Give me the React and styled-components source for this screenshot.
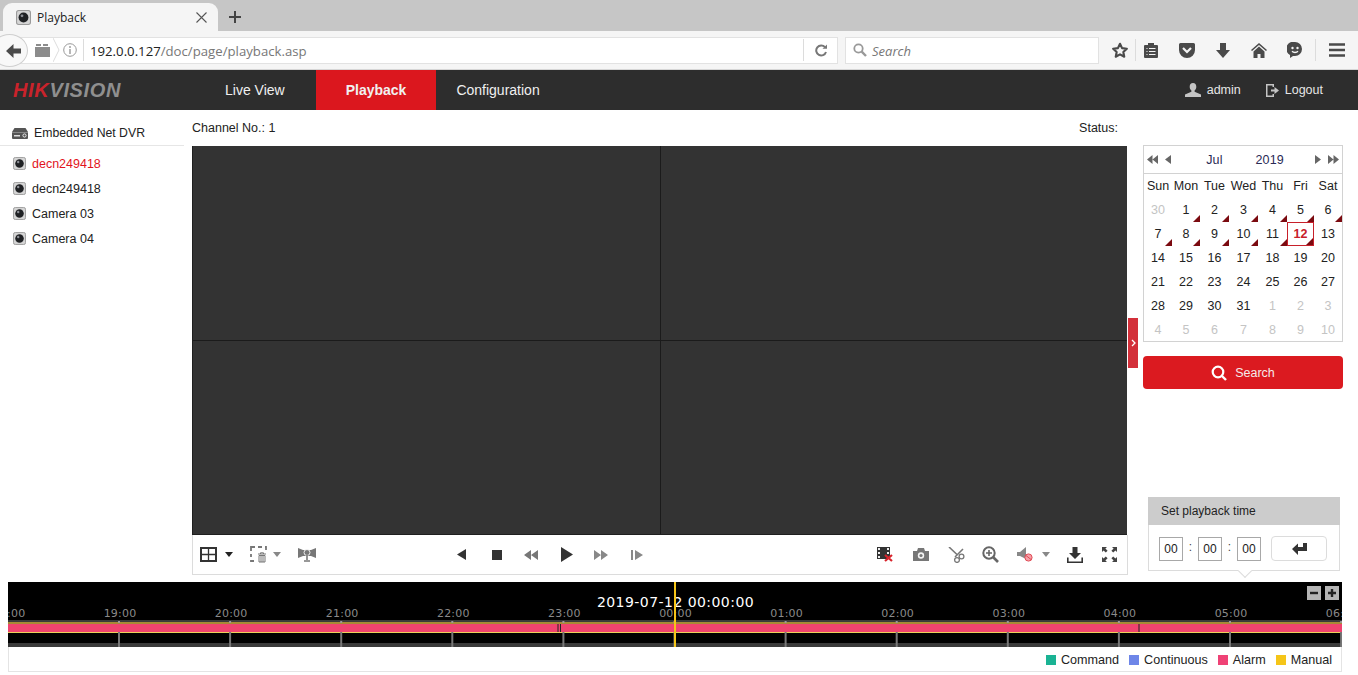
import React from "react";
import styled, { createGlobalStyle } from "styled-components";

const Global = createGlobalStyle`
  html, body { margin: 0; padding: 0; background: #fff; height: 675px; overflow: hidden; }
  body { font-family: "Liberation Sans", Arial, sans-serif; font-size: 12.5px; color: #222; }
  * { box-sizing: border-box; }
`;

const TabStrip = styled.div`
  height: 31px; background: #c6c6c6; display: flex; align-items: flex-end; padding-left: 3px;
`;
const Tab = styled.div`
  width: 215px; height: 28px; background: #f5f5f5; border-radius: 9px 9px 0 0;
  display: flex; align-items: center; padding: 0 11px 0 13px; gap: 6px;
  font-family: "Open Sans", sans-serif; font-size: 12px; color: #222;
`;
const TabTitle = styled.span` flex: 1; `;
const NewTab = styled.div` margin: 0 0 7px 10px; height: 14px; display: flex; `;

const NavBar = styled.div`
  height: 39px; background: #f5f5f5; border-bottom: 1px solid #d6d6d6;
  display: flex; align-items: center; position: relative; padding-left: 0;
`;
const BackCircle = styled.div`
  position: absolute; left: -9px; top: 3px; width: 37px; height: 33px; border-radius: 50%;
  background: #f8f8f8; border: 1px solid #cfcfcf; display: flex; align-items: center; justify-content: flex-end; padding-right: 6px;
`;
const UrlBox = styled.div`
  width: 838px; height: 27px; background: #fff; border: 1px solid #e2e2e2; border-left: 0;
  display: flex; align-items: center; padding-left: 35px;
`;
const UrlPart = styled.span`
  font-family: "Open Sans", sans-serif; font-size: 13.2px; padding-top: 1px; color: ${p => (p.$dim ? "#777" : "#222")};
`;
const UrlSep = styled.div` width: 1px; height: 22px; background: #dcdcdc; margin: ${p => p.$m}; `;
const SearchBox = styled.div`
  width: 254px; height: 27px; margin-left: 7px; background: #fff; border: 1px solid #e2e2e2;
  display: flex; align-items: center; padding-left: 7px; gap: 5px;
  font-family: "Open Sans", sans-serif; font-style: italic; font-size: 13px; color: #777;
`;
const SearchHint = styled.span` padding-top: 1px; `;
const NavIcons = styled.div` display: flex; align-items: center; margin-left: 12px; `;
const NavSlot = styled.div`
  width: ${p => p.$w}px; display: flex; justify-content: center; align-items: center; height: 24px; flex: none;
`;

const Header = styled.header`
  height: 40px; background: #2d2d2d; display: flex; align-items: center;
`;
const Logo = styled.div`
  width: 205px; padding-left: 13px; font-style: italic; font-weight: bold; font-size: 20px; letter-spacing: 0.65px; color: #8f8f8f;
`;
const LogoRed = styled.span` color: #c9232b; `;
const MainNav = styled.nav` display: flex; height: 40px; `;
const NavItem = styled.div`
  height: 40px; display: flex; align-items: center; font-size: 14px;
  padding: 0 ${p => (p.$active ? 30 : 20)}px; margin-left: ${p => (p.$active ? 11 : 0)}px;
  background: ${p => (p.$active ? "#db171e" : "transparent")}; color: #f0f0f0;
  font-weight: ${p => (p.$active ? "bold" : "normal")};
`;
const UserArea = styled.div`
  margin-left: auto; display: flex; align-items: center; padding-right: 35px; color: #e6e6e6; font-size: 12.5px;
`;
const UserLabel = styled.span` margin: 0 ${p => p.$mr || 0}px 0 ${p => p.$ml}px; `;

const Main = styled.main` display: flex; height: 465px; `;
const Sidebar = styled.aside` width: 184px; margin-right: 8px; flex: none; `;
const SideHead = styled.div`
  height: 36px; padding: 15px 0 0 12px; display: flex; align-items: flex-start; gap: 6px;
  border-bottom: 1px solid #e6e6e6; font-size: 12.25px; line-height: 16px;
`;
const CamList = styled.ul` list-style: none; margin: 5px 0 0; padding: 0 0 0 13px; `;
const CamItem = styled.li`
  height: 25px; display: flex; align-items: center; gap: 6px;
  color: ${p => (p.$active ? "#e2141c" : "#222")};
`;

const Center = styled.section` width: 936px; flex: none; position: relative; `;
const ChannelBar = styled.div`
  height: 36px; display: flex; justify-content: space-between; align-items: center; padding: 0 10px 0 0;
`;
const VideoGrid = styled.div`
  height: 389px; width: 935px; display: grid; grid-template-columns: 467px 466px; grid-template-rows: 194px 1fr; gap: 1px;
  background: #1b1b1b; border: solid #1f1f1f; border-width: 0 0 1px 1px;
`;
const VideoCell = styled.div` background: #333; `;
const Toolbar = styled.div`
  height: 40px; display: flex; align-items: center; padding: 0 9px 0 6px;
  border: 1px solid #dcdcdc; border-top: 0;
`;
const ToolGroup = styled.div` display: flex; align-items: center; margin-left: ${p => p.$ml || 0}; `;
const Tool = styled.div`
  width: ${p => p.$w}px; margin-left: ${p => p.$ml || 0}px; flex: none; height: 20px;
  display: flex; align-items: center; justify-content: center;
`;
const Handle = styled.div`
  position: absolute; left: 100%; top: 208px; width: 10px; height: 50px; background: #d3303a;
  display: flex; align-items: center; justify-content: center;
`;

const RightCol = styled.aside`
  width: 200px; margin-left: 15px; flex: none; padding-top: 35px; display: flex; flex-direction: column;
`;
const Calendar = styled.div` width: 200px; border: 1px solid #d2d2d2; height: 197px; `;
const CalHead = styled.div`
  height: 28px; border-bottom: 1px solid #d2d2d2; display: flex; align-items: center; padding: 0 3px;
  color: #2a2a55; font-size: 12.5px;
`;
const CalArrow = styled.div` width: ${p => p.$w}px; margin-left: ${p => p.$ml || 0}px; display: flex; justify-content: center; `;
const CalTitle = styled.div` width: ${p => p.$w}px; margin-left: ${p => p.$ml || 0}px; text-align: center; letter-spacing: .2px; `;
const CalGrid = styled.div`
  display: grid; grid-template-columns: 28px 28px 29px 29px 29px 27px 28px; grid-auto-rows: 24px;
`;
const CalWeek = styled.div` display: flex; align-items: center; justify-content: center; font-size: 12.5px; color: #222; `;
const Day = styled.div`
  position: relative; display: flex; align-items: center; justify-content: center; font-size: 12.5px;
  color: ${p => (p.$muted ? "#c4c4c4" : p.$selected ? "#c8202a" : "#222")};
  font-weight: ${p => (p.$selected ? "bold" : "normal")};
  border: ${p => (p.$selected ? "1px solid #c8202a" : "0")};
  &::after {
    content: ""; position: absolute; right: 0; bottom: 0;
    display: ${p => (p.$mark ? "block" : "none")}; border-style: solid; border-width: 0 0 7px 7px;
    border-color: transparent transparent #7b0a10 transparent;
  }
`;
const SearchButton = styled.button`
  margin-top: 14px; width: 200px; height: 33px; border: 0; border-radius: 4px; background: #db1a20; color: #f5eaea;
  display: flex; align-items: center; justify-content: center; gap: 8px; font: 12.5px "Liberation Sans", sans-serif;
`;
const TimePanel = styled.div`
  margin: auto 0 4px 5px; width: 192px; height: 74px; border: 1px solid #dcdcdc; border-top: 0; position: relative;
  &::after {
    content: ""; position: absolute; left: 91px; bottom: -6px; width: 9px; height: 9px; background: #fff;
    border: solid #dcdcdc; border-width: 0 1px 1px 0; transform: rotate(45deg);
  }
`;
const TimeHead = styled.div` height: 28px; background: #ccc; display: flex; align-items: center; padding-left: 13px; font-size: 12px; color: #222; margin: 0 -1px; `;
const TimeBody = styled.div` display: flex; align-items: center; padding: 11px 0 0 10px; `;
const TimeInput = styled.input`
  width: 24px; height: 24px; border: 1px solid #a8a8a8; padding: 0; text-align: center; background: #fff;
  font: 12px "Liberation Sans", sans-serif; color: #222; outline: none;
`;
const Colon = styled.span` width: 15px; text-align: center; font-size: 12px; margin-top: -4px; color: #444; `;
const EnterButton = styled.button`
  width: 56px; height: 25px; margin-left: 10px; background: #fff; border: 1px solid #dcdcdc; border-radius: 4px;
  display: flex; align-items: center; justify-content: center; padding: 0;
`;

const Timeline = styled.section` margin: 7px 16px 0 8px; height: 90px; position: relative; `;
const TimelineChart = styled.svg` display: block; `;
const ZoomButtons = styled.div` position: absolute; right: 3px; top: 4px; display: flex; gap: 4px; `;
const ZoomButton = styled.div`
  width: 14px; height: 14px; background: #b5b5b5; color: #1a1a1a; display: flex; align-items: center; justify-content: center;
`;
const Legend = styled.div`
  height: 25px; border: 1px solid #e4e4e4; border-top: 0; display: flex; align-items: center; justify-content: flex-end;
  padding: 1px 9px 0 0; font-size: 12.6px; color: #222;
`;
const LegendItem = styled.div` display: flex; align-items: center; gap: 5px; margin-left: 10px; `;
const Swatch = styled.span` width: 10px; height: 10px; background: ${p => p.$c}; `;

const Lens = ({ s = 13 }) => (
  <svg width={s} height={s} viewBox="0 0 14 14">
    <rect x=".5" y=".5" width="13" height="13" rx="2" fill="#d4d4d4" stroke="#9a9a9a" />
    <circle cx="7" cy="7" r="4.6" fill="#1f2124" />
    <circle cx="5.6" cy="5.4" r="1.3" fill="#8d8f96" />
  </svg>
);
const Dvr = () => (
  <svg width="16" height="11" viewBox="0 0 16 11" style={{ marginTop: 3 }}>
    <path d="M2.5 0h11L16 4v6a1 1 0 0 1-1 1H1a1 1 0 0 1-1-1V4z" fill="#555" />
    <rect x="0" y="4" width="16" height="1" fill="#888" />
    <rect x="2" y="7" width="6" height="1.5" fill="#ddd" />
    <circle cx="12.5" cy="7.5" r="1.6" fill="none" stroke="#eee" />
  </svg>
);
const G = "#4a4a4a";
const Ic = ({ w = 16, h = 16, vb, children, style }) => (
  <svg width={w} height={h} viewBox={vb || `0 0 ${w} ${h}`} style={style}>{children}</svg>
);
const Caret = ({ c = "#222" }) => <Ic w={8} h={5}><path d="M0 0h8L4 5z" fill={c} /></Ic>;

export default function App() {
  const weeks = ["Sun", "Mon", "Tue", "Wed", "Thu", "Fri", "Sat"];
  const days = [
    [30, 1], ...Array.from({ length: 31 }, (_, i) => [i + 1, 0]),
    ...Array.from({ length: 10 }, (_, i) => [i + 1, 1]),
  ];
  const hours = ["19:00", "20:00", "21:00", "22:00", "23:00", "00:00", "01:00", "02:00", "03:00", "04:00", "05:00", "06:00"];
  const ticks = hours.map((_, i) => 111 + i * 111.1);
  return (
    <>
      <Global />
      <TabStrip>
        <Tab>
          <Lens s={15} />
          <TabTitle>Playback</TabTitle>
          <Ic w={11} h={11}><path d="M.5.5l10 10M10.5.5l-10 10" stroke="#555" strokeWidth="1.1" /></Ic>
        </Tab>
        <NewTab><Ic w={14} h={14}><path d="M7 1v12M1 7h12" stroke="#444" strokeWidth="2" /></Ic></NewTab>
      </TabStrip>
      <NavBar>
        <BackCircle>
          <Ic w={15} h={14}><path d="M7.500 0L0 7l7.500 7V9.500H15v-5H7.500z" fill="#4a4a4a" /></Ic>
        </BackCircle>
        <UrlBox>
          <Ic w={15} h={13} style={{ flex: "none" }}><path d="M0 3h15v10H0zM1 0h5v2H1zM8 0h5v2H8z" fill="#8c8c8c" /></Ic>
          <Ic w={7} h={26} style={{ marginLeft: 3, flex: "none" }}><path d="M0 1l6 12L0 25" fill="none" stroke="#ddd" /></Ic>
          <Ic w={14} h={14} style={{ marginLeft: 3, flex: "none" }}>
            <circle cx="7" cy="7" r="6.3" fill="none" stroke="#999" />
            <path d="M7 6v5M7 3v2" stroke="#999" strokeWidth="1.4" />
          </Ic>
          <UrlSep $m="0 6px 0 6px" />
          <UrlPart>192.0.0.127</UrlPart><UrlPart $dim>/doc/page/playback.asp</UrlPart>
          <UrlSep $m="0 0 0 auto" />
          <NavSlot $w={33}>
            <Ic w={12} h={13}><path d="M10 3.2A5 5 0 1 0 11 8" fill="none" stroke="#777" strokeWidth="2" /><path d="M7.500 4.800H12V.5z" fill="#777" /></Ic>
          </NavSlot>
        </UrlBox>
        <SearchBox>
          <Ic w={14} h={14}><circle cx="5.5" cy="5.5" r="4.2" fill="none" stroke="#999" strokeWidth="1.8" /><path d="M8.700 8.700l4.300 4.300" stroke="#999" strokeWidth="2.4" /></Ic>
          <SearchHint>Search</SearchHint>
        </SearchBox>
        <NavIcons>
          <NavSlot $w={18}>
            <Ic w={18} h={17} vb="0 0 24 24"><path d="M12 2.500l2.900 6.200 6.800.8-5 4.600 1.300 6.700-6-3.300-6 3.300 1.300-6.700-5-4.600 6.800-.8z" fill="none" stroke={G} strokeWidth="3" strokeLinejoin="round" /></Ic>
          </NavSlot>
          <UrlSep $m="0 6px 0 6px" />
          <NavSlot $w={18}>
            <Ic w={14} h={16}><path d="M1 3h3V1h6v2h3a1 1 0 0 1 1 1v11a1 1 0 0 1-1 1H1a1 1 0 0 1-1-1V4a1 1 0 0 1 1-1z" fill={G} /><path d="M2.500 6.500h1M2.500 9.500h1M2.500 12.500h1M5 6.500h6.500M5 9.500h6.500M5 12.500h6.500" stroke="#f5f5f5" /></Ic>
          </NavSlot>
          <NavSlot $w={54}>
            <Ic w={16} h={15}><path d="M1.500 0h13A1.500 1.500 0 0 1 16 1.500V7A8 8 0 0 1 0 7V1.500A1.500 1.500 0 0 1 1.500 0z" fill={G} /><path d="M4 5l4 4 4-4" fill="none" stroke="#f5f5f5" strokeWidth="2.2" /></Ic>
          </NavSlot>
          <NavSlot $w={18}>
            <Ic w={14} h={15}><path d="M4 0h6v7h4l-7 8-7-8h4z" fill={G} /></Ic>
          </NavSlot>
          <NavSlot $w={54}>
            <Ic w={16} h={15}><path d="M8 0l8 7-1 1-7-6-7 6-1-1z" fill={G} /><path d="M8 3.500l5.500 5V15H9.500v-4h-3v4H2.500V8.500z" fill={G} /></Ic>
          </NavSlot>
          <NavSlot $w={18}>
            <Ic w={16} h={16}><path d="M8 0a7 7 0 0 1 0 14H6l-3 2v-3A7 7 0 0 1 8 0z" fill={G} /><circle cx="5.500" cy="6" r="1.2" fill="#f5f5f5" /><circle cx="10.500" cy="6" r="1.2" fill="#f5f5f5" /><path d="M5 9.300c1.500 1.600 4.500 1.600 6 0" stroke="#f5f5f5" fill="none" strokeWidth="1.3" /></Ic>
          </NavSlot>
          <UrlSep $m="0 12px 0 11px" />
          <NavSlot $w={18}>
            <Ic w={16} h={14}><path d="M0 1.500h16M0 7h16M0 12.500h16" stroke={G} strokeWidth="2.6" /></Ic>
          </NavSlot>
        </NavIcons>
      </NavBar>

      <Header>
        <Logo><LogoRed>HIK</LogoRed>VISION</Logo>
        <MainNav>
          <NavItem>Live View</NavItem>
          <NavItem $active>Playback</NavItem>
          <NavItem>Configuration</NavItem>
        </MainNav>
        <UserArea>
          <Ic w={16} h={14}><path d="M8 0c2.200 0 3.300 1.600 3.300 3.800 0 1.600-.7 3-1.700 3.800v1.200L16 11.500V14H0v-2.500l6.400-2.700V7.600c-1-.8-1.700-2.200-1.700-3.800C4.700 1.600 5.800 0 8 0z" fill="#c4c4c4" /></Ic>
          <UserLabel $ml={6} $mr={25}>admin</UserLabel>
          <Ic w={13} h={13}><path d="M0 0h8v3H6.500V1.500h-5v10h5V10H8v3H0z" fill="#c4c4c4" /><path d="M5 5.500h3.500V3L13 6.500 8.500 10V7.500H5z" fill="#c4c4c4" /></Ic>
          <UserLabel $ml={6}>Logout</UserLabel>
        </UserArea>
      </Header>

      <Main>
        <Sidebar>
          <SideHead><Dvr />Embedded Net DVR</SideHead>
          <CamList>
            <CamItem $active><Lens />decn249418</CamItem>
            <CamItem><Lens />decn249418</CamItem>
            <CamItem><Lens />Camera 03</CamItem>
            <CamItem><Lens />Camera 04</CamItem>
          </CamList>
        </Sidebar>
        <Center>
          <ChannelBar><span>Channel No.: 1</span><span>Status:</span></ChannelBar>
          <VideoGrid><VideoCell /><VideoCell /><VideoCell /><VideoCell /></VideoGrid>
          <Toolbar>
            <ToolGroup>
              <Tool $w={18}><Ic w={17} h={15}><rect x="1" y="1" width="15" height="13" fill="#fff" stroke="#333" strokeWidth="2" /><path d="M8.500 1v13M1 7.500h15" stroke="#333" strokeWidth="1.3" /></Ic></Tool>
              <Tool $w={8} $ml={8}><Caret /></Tool>
              <Tool $w={18} $ml={17}><Ic w={18} h={17}><path d="M1 5V1h4M8 1h4M15 1h1v3M1 8v3M1 14v1h3" fill="none" stroke="#777" strokeWidth="1.8" /><path d="M8 8h8M9 9.500h6V16H9zM11 9.500V16M13 9.500V16M10.500 8V6.800h3V8" fill="none" stroke="#777" /></Ic></Tool>
              <Tool $w={8} $ml={5}><Caret c="#888" /></Tool>
              <Tool $w={18} $ml={17}><Ic w={18} h={15}><path d="M0 1l5 2h8l5-2v10l-5-2H5l-5 2z" fill="#777" /><circle cx="9" cy="5.500" r="3" fill="none" stroke="#eee" /><path d="M9 8v5M6 14h6" stroke="#777" strokeWidth="1.6" /></Ic></Tool>
            </ToolGroup>
            <ToolGroup $ml="140px">
              <Tool $w={10}><Ic w={9} h={11}><path d="M9 0v11L0 5.500z" fill="#333" /></Ic></Tool>
              <Tool $w={10} $ml={26}><Ic w={10} h={10}><rect width="10" height="10" fill="#333" /></Ic></Tool>
              <Tool $w={14} $ml={22}><Ic w={14} h={10}><path d="M7 0v10L0 5zM14 0v10L7 5z" fill="#777" /></Ic></Tool>
              <Tool $w={14} $ml={22}><Ic w={12} h={15}><path d="M0 0l12 7.500L0 15z" fill="#333" /></Ic></Tool>
              <Tool $w={14} $ml={20}><Ic w={14} h={10}><path d="M0 0l7 5-7 5zM7 0l7 5-7 5z" fill="#888" /></Ic></Tool>
              <Tool $w={12} $ml={23}><Ic w={12} h={10}><path d="M0 0h2v10H0zM4 0l8 5-8 5z" fill="#888" /></Ic></Tool>
            </ToolGroup>
            <ToolGroup $ml="234px">
              <Tool $w={16}><Ic w={16} h={15}><rect width="13" height="12" fill="#333" /><path d="M1 1h2v2H1zM1 5h2v2H1zM1 9h2v2H1zM10 1h2v2h-2zM10 5h2v2h-2z" fill="#eee" /><path d="M8 8l7 6M15 8l-7 6" stroke="#d8232b" strokeWidth="2.2" /></Ic></Tool>
              <Tool $w={16} $ml={20}><Ic w={16} h={13}><path d="M0 3h4l1-3h6l1 3h4v10H0z" fill="#777" /><circle cx="8" cy="7.500" r="3.200" fill="#f4f4f4" /><circle cx="8" cy="7.500" r="1.600" fill="#777" /></Ic></Tool>
              <Tool $w={18} $ml={18}><Ic w={17} h={16}><path d="M1 0l8.500 8M15 2L7 10" stroke="#777" strokeWidth="1.6" /><circle cx="13.500" cy="9.500" r="2.400" fill="none" stroke="#777" strokeWidth="1.3" /><circle cx="9" cy="13" r="2.400" fill="none" stroke="#777" strokeWidth="1.3" /></Ic></Tool>
              <Tool $w={18} $ml={16}><Ic w={17} h={17}><circle cx="7" cy="7" r="5.700" fill="none" stroke="#666" strokeWidth="2" /><path d="M11 11l5 5" stroke="#666" strokeWidth="2.6" /><path d="M7 4v6M4 7h6" stroke="#666" strokeWidth="1.6" /></Ic></Tool>
              <Tool $w={16} $ml={18}><Ic w={16} h={15}><path d="M0 5h3l6-5v12L3 9H0z" fill="#888" /><circle cx="11.500" cy="10.500" r="3.600" fill="#f6a0a8" stroke="#df4b55" /><path d="M9 8.500l5 4" stroke="#df4b55" /></Ic></Tool>
              <Tool $w={8} $ml={9}><Caret c="#888" /></Tool>
              <Tool $w={16} $ml={17}><Ic w={16} h={16}><path d="M5.500 0h5v6H14l-6 6-6-6h3.500z" fill="#333" /><path d="M0 10.500h1.600v4h12.800v-4H16V16H0z" fill="#333" /></Ic></Tool>
              <Tool $w={16} $ml={18}><Ic w={15} h={15}><path d="M0 0h5L3.400 1.600l2.200 2.200-1.800 1.800-2.200-2.200L0 5zM15 0v5l-1.600-1.600-2.200 2.200-1.800-1.800 2.200-2.200L10 0zM0 15v-5l1.600 1.600 2.200-2.200 1.800 1.800-2.200 2.200L5 15zM15 15h-5l1.600-1.600-2.200-2.200 1.800-1.800 2.200 2.200L15 10z" fill="#444" /></Ic></Tool>
            </ToolGroup>
          </Toolbar>
          <Handle><Ic w={5} h={8}><path d="M1 1l3 3-3 3" fill="none" stroke="#fff" strokeWidth="1.3" /></Ic></Handle>
        </Center>
        <RightCol>
          <Calendar>
            <CalHead>
              <CalArrow $w={12}><Ic w={11} h={9}><path d="M5.500 0v9L0 4.500zM11 0v9L5.500 4.500z" fill="#666" /></Ic></CalArrow>
              <CalArrow $w={6} $ml={6}><Ic w={6} h={9}><path d="M6 0v9L0 4.500z" fill="#666" /></Ic></CalArrow>
              <CalTitle $w={30} $ml={29}>Jul</CalTitle>
              <CalTitle $w={40} $ml={21}>2019</CalTitle>
              <CalArrow $w={6} $ml={26}><Ic w={6} h={9}><path d="M0 0v9l6-4.500z" fill="#666" /></Ic></CalArrow>
              <CalArrow $w={12} $ml={6}><Ic w={11} h={9}><path d="M0 0v9l5.500-4.500zM5.500 0v9L11 4.500z" fill="#666" /></Ic></CalArrow>
            </CalHead>
            <CalGrid>
              {weeks.map(w => <CalWeek key={w}>{w}</CalWeek>)}
              {days.map(([d, m], i) => (
                <Day key={i} $muted={!!m} $selected={!m && d === 12} $mark={!m && d <= 12}>{d}</Day>
              ))}
            </CalGrid>
          </Calendar>
          <SearchButton>
            <Ic w={16} h={16}><circle cx="7" cy="7" r="5.300" fill="none" stroke="#fff" strokeWidth="2.2" /><path d="M11 11l4 4" stroke="#fff" strokeWidth="2.4" /></Ic>
            Search
          </SearchButton>
          <TimePanel>
            <TimeHead>Set playback time</TimeHead>
            <TimeBody>
              <TimeInput readOnly value="00" />
              <Colon>:</Colon>
              <TimeInput readOnly value="00" />
              <Colon>:</Colon>
              <TimeInput readOnly value="00" />
              <EnterButton>
                <Ic w={15} h={12}><path d="M11 0h4v8H6v4L0 6l6-5.500V4h5z" fill="#333" /></Ic>
              </EnterButton>
            </TimeBody>
          </TimePanel>
        </RightCol>
      </Main>

      <Timeline>
        <TimelineChart width="1334" height="65" viewBox="0 0 1334 65">
          <rect width="1334" height="65" fill="#000" />
          <rect y="38" width="1334" height="3" fill="#3a3a3a" />
          <rect y="40" width="1334" height="2" fill="#a88a35" />
          <rect y="42" width="1334" height="8" fill="#f0436f" />
          <rect y="50" width="1334" height="1" fill="#ecd15a" />
          <rect y="61" width="1334" height="4" fill="#3a3a3a" />
          {ticks.map(x => (
            <g key={x}>
              <rect x={x - 1} y="50" width="2" height="15" fill="#777" />
              <rect x={x - 1} y="39" width="2" height="2" fill="#999" />
            </g>
          ))}
          <path d="M550 42v8M552.500 42v8M1131 42v8" stroke="#222" />
          <text x="1" y="35" textAnchor="middle" fontFamily="DejaVu Sans" fontSize="11" letterSpacing=".2" fill="#8a8a8a">18:00</text>
          {hours.map((h, i) => (
            <text key={h} x={ticks[i] + 1} y="35" textAnchor="middle" fontFamily="DejaVu Sans" fontSize="11" letterSpacing=".2" fill="#8a8a8a">{h}</text>
          ))}
          <text x="667.500" y="25" textAnchor="middle" fontFamily="DejaVu Sans" fontSize="14" letterSpacing=".45" fill="#fff">2019-07-12 00:00:00</text>
          <rect x="666" width="2" height="65" fill="#f5c518" />
        </TimelineChart>
        <ZoomButtons>
          <ZoomButton><Ic w={10} h={10}><path d="M1 5h8" stroke="#222" strokeWidth="2.4" /></Ic></ZoomButton>
          <ZoomButton><Ic w={10} h={10}><path d="M1 5h8M5 1v8" stroke="#222" strokeWidth="2.4" /></Ic></ZoomButton>
        </ZoomButtons>
        <Legend>
          <LegendItem><Swatch $c="#1ab394" />Command</LegendItem>
          <LegendItem><Swatch $c="#6e86e8" />Continuous</LegendItem>
          <LegendItem><Swatch $c="#ef4276" />Alarm</LegendItem>
          <LegendItem><Swatch $c="#f5c518" />Manual</LegendItem>
        </Legend>
      </Timeline>
    </>
  );
}
